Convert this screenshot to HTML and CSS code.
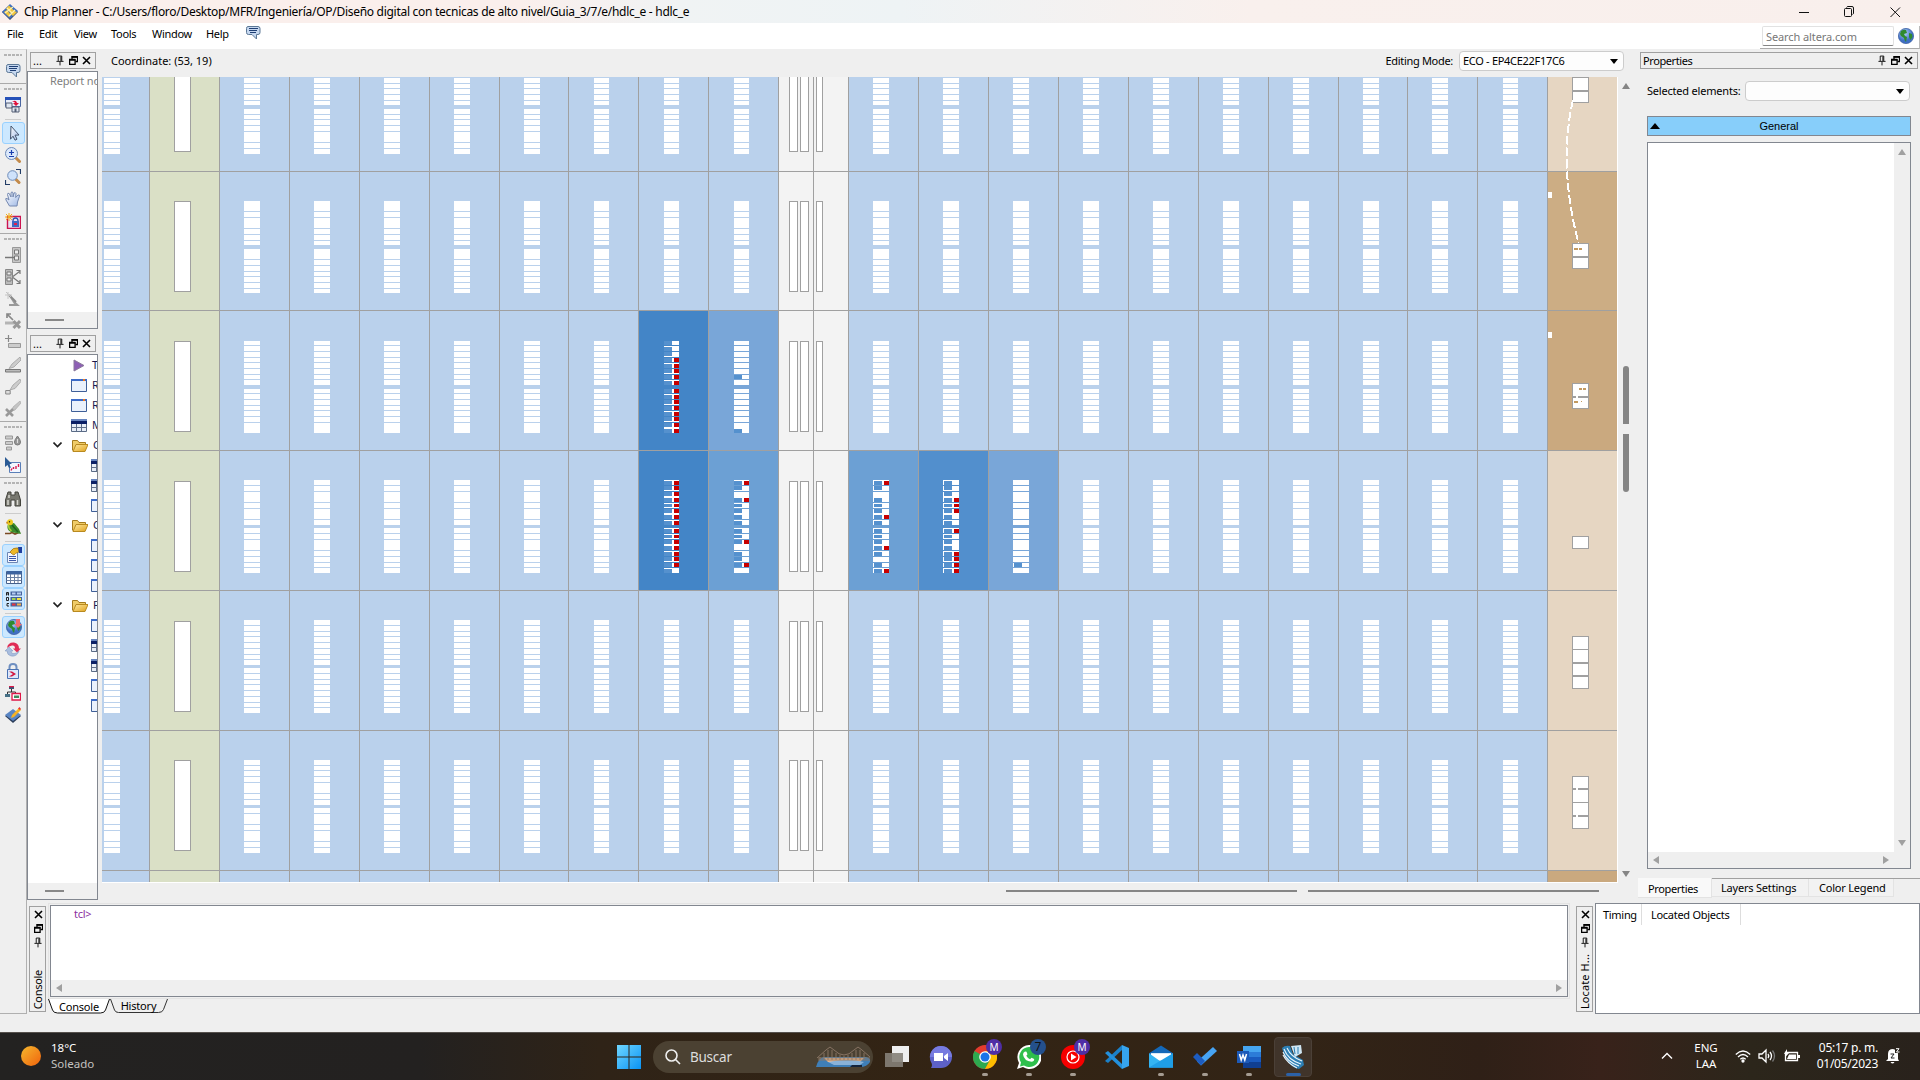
FILE: index.html
```html
<!DOCTYPE html>
<html lang="es">
<head>
<meta charset="utf-8">
<title>Chip Planner</title>
<link rel="stylesheet" href="styles.css">
</head>
<body>
<svg class="defs" width="0" height="0">
  <defs>
    <linearGradient id="gBlue" x1="0" y1="0" x2="1" y2="1"><stop offset="0" stop-color="#fff"/><stop offset="1" stop-color="#9fb9e6"/></linearGradient>
    <linearGradient id="gWin" x1="0" y1="0" x2="1" y2="1"><stop offset="0" stop-color="#6fd6ff"/><stop offset="1" stop-color="#0a93f5"/></linearGradient>
    <linearGradient id="gSun" x1="0" y1="0" x2="1" y2="1"><stop offset="0" stop-color="#f5b92e"/><stop offset="1" stop-color="#f0620c"/></linearGradient>
    <linearGradient id="gFold" x1="0" y1="0" x2="1" y2="1"><stop offset="0" stop-color="#ffe9a0"/><stop offset="1" stop-color="#e0a21c"/></linearGradient>
    <radialGradient id="gGlobe" cx=".4" cy=".3"><stop offset="0" stop-color="#b9d6ff"/><stop offset="1" stop-color="#3f6fc4"/></radialGradient>
  </defs>
  <symbol id="chat" viewBox="0 0 16 16"><path d="M3 1.500h10q2 0 2 2v4q0 2-2 2h-1.500V14L7 9.500H3.500q-2 0-2-2v-4q0-2 1.500-2z" fill="#c5d7ef" stroke="#5c7896"/><path d="M4 3.500h9M4 5.500h8M5 7.500h6" stroke="#1f3f74"/></symbol>
  <symbol id="chip" viewBox="0 0 16 16"><path d="M8 1l8 7-8 8-8-8z" fill="#33415c"/><path d="M8 0l8 7-8 8-8-7z" fill="#3f6fc0"/><path d="M4 4.500l3-3 5 5-3 3zM9 10l3-3 3 1-4 4zM2 8l3-2 4 5-2 2z" fill="#f3c53b"/><path d="M5 4l5 5M11 3L3 9M13 6l-6 6" stroke="#fff2ae" stroke-width="1.300"/></symbol>
  <symbol id="winchip" viewBox="0 0 16 16"><path d="M.5.500h15v9H.5z" fill="#e8eefb" stroke="#4a66a0"/><path d="M0 0h16v3H0z" fill="#2450b8"/><path d="M1 6h6v5H1zM7 10h7v5H7z" fill="#dfe6f0" stroke="#555f75"/><path d="M9.500 11.500h2V15h-2z" fill="#555f75"/><path d="M7 5q4-3 5 1h2l-3 3-3-3h2q-1-2-3-1z" fill="#e0103a"/></symbol>
  <symbol id="arrow" viewBox="0 0 16 16"><path d="M5 1l8 9-4 .2 2 4-2 1-2-4-2.500 3z" fill="url(#gBlue)" stroke="#44546e"/></symbol>
  <symbol id="zoompm" viewBox="0 0 16 16"><path d="M11 11l3.500 3.500" stroke="#c38a4a" stroke-width="3" stroke-linecap="round"/><circle cx="6.500" cy="6.500" r="6" fill="#dbe8fb" stroke="#6d8bb8"/><path d="M6.500 3v5M4 5.500h5M4 9.500h5" stroke="#1a3fb0" stroke-width="1.200"/></symbol>
  <symbol id="zoomfit" viewBox="0 0 16 16"><path d="M11 10.500l3 3" stroke="#c38a4a" stroke-width="3" stroke-linecap="round"/><circle cx="7.500" cy="6.500" r="4.800" fill="#cfe2fb" stroke="#6d8bb8"/><path d="M11 .5h4.500V5M.5 11v4.500H5" fill="none" stroke="#223c66" stroke-width="1.200"/></symbol>
  <symbol id="hand" viewBox="0 0 16 16"><path d="M4.500 15L1 9q-1-2 1-1.500L4 9 2.500 3.500q0-2 1.700-1L6 6V1.700q1-1.700 2 0V6l1-4q1.500-1 2 .5L10.700 6.500 13 4q2-.5 1.500 1.200L12.500 11l-.5 4z" fill="url(#gBlue)" stroke="#7488b0"/></symbol>
  <symbol id="lockstar" viewBox="0 0 16 16"><path d="M2.500 3.500h13v12h-13z" fill="#e7dff3" stroke="#cc1450" stroke-width="1.400"/><path d="M4 0v8M0 4h8M1 1l6 6M7 1L1 7" stroke="#f3b116"/><path d="M8 8q0-3 2.500-3T13 8" fill="none" stroke="#2a55b0" stroke-width="1.300"/><path d="M7 8h7v6H7z" fill="#4069c4"/><path d="M9 10h3v2H9z" fill="#e0204c"/></symbol>
  <symbol id="gport" viewBox="0 0 16 16"><path d="M7.500.500h8v15h-8z" fill="#c6c6c6" stroke="#999"/><path d="M9.500 3h4v4h-4zM9.500 9h4v4h-4z" fill="#eee" stroke="#777"/><path d="M0 10.500h9" stroke="#777" stroke-width="1.500"/></symbol>
  <symbol id="gshare" viewBox="0 0 16 16"><path d="M.5.500h7v15h-7z" fill="#bbb" stroke="#888"/><path d="M2 3h4v3H2zM2 9h4v3H2z" fill="#eee" stroke="#777"/><path d="M8 7.500l6.500-5M11.500 1.500H15V5M8 8.500l6.500 5M11.500 14.500H15V11" fill="none" stroke="#777" stroke-width="1.200"/></symbol>
  <symbol id="gwand" viewBox="0 0 16 16"><path d="M4 5l11 10H4v-2h5z" fill="#999"/><path d="M4 4l7 7" stroke="#8a8a8a" stroke-width="2"/><path d="M3 1v7M0 4h7M1 1l5 5" stroke="#c4c4c4"/></symbol>
  <symbol id="gnox" viewBox="0 0 16 16"><path d="M2 1l6 6M2 5V1h4" fill="none" stroke="#888" stroke-width="1.700"/><path d="M0 8.500h9v3H0z" fill="#b4b4b4"/><path d="M8.500 8l6.500 7M15 8l-6.500 7" stroke="#999" stroke-width="3"/></symbol>
  <symbol id="gplus" viewBox="0 0 16 16"><path d="M3.500 0v7M0 3.500h7" stroke="#888" stroke-width="1.200"/><path d="M3.500 8.500h12v4h-12z" fill="#ccc" stroke="#999"/></symbol>
  <symbol id="gpen" viewBox="0 0 16 16"><path d="M15 0L7 7l-3 4.500 5-1.500 7-7z" fill="#ccc" stroke="#999" stroke-width=".7"/><path d="M.5 12.500h15v2.500H.5z" fill="#bbb" stroke="#777"/></symbol>
  <symbol id="gpen2" viewBox="0 0 16 16"><path d="M15 0L8 6l-3 5 5-1.500 6-7z" fill="#ccc" stroke="#999" stroke-width=".7"/><path d="M.7 11.500h4.500v3.500H.7z" fill="#ddd" stroke="#888"/></symbol>
  <symbol id="gpenx" viewBox="0 0 16 16"><path d="M15 0L8 6l-1 4 3-1 6-7z" fill="#c4c4c4" stroke="#aaa" stroke-width=".7"/><path d="M1 8l7 7M8 8l-7 7" stroke="#999" stroke-width="2.600"/></symbol>
  <symbol id="gdrop" viewBox="0 0 16 16"><path d="M.5 1h7v3h-7zM.5 6.500h7v3h-7zM1.500 12h5v3h-5z" fill="#ccc" stroke="#999"/><path d="M12.500 1q3 4 3 6a3 3 0 0 1-6 0q0-2 3-6z" fill="#999" stroke="#777"/><path d="M12.500 4v4" stroke="#ddd"/></symbol>
  <symbol id="curwave" viewBox="0 0 16 16"><path d="M4.500 5.500h11v10h-11z" fill="#f3f7ff" stroke="#5a7fb8"/><path d="M6 13.500l1-2M8.500 12v-2M11 12V9M13.500 10V7" stroke="#d81c50" stroke-width="1.400"/><path d="M0 0l7 7H4l2 3.500-2 .5-1.500-3L0 10z" fill="#2a5a94"/></symbol>
  <symbol id="binoc" viewBox="0 0 16 16"><path d="M3 1h3v3h4V1h3l2.500 8v6H10V9H6v6H.5V9z" fill="#77776f" stroke="#44443e"/><path d="M3 9v5M12.500 9v5M4 4v3" stroke="#d6d6d0" stroke-width="1.500"/></symbol>
  <symbol id="bird" viewBox="0 0 16 16"><path d="M0 14.500h5l2-1 3 1.500 5-2" stroke="#7a4a22" stroke-width="1.600" fill="none"/><path d="M3 5l6-1 5 6 2 5-5-1-5-1Q1 11 3 5z" fill="#3c8c2c"/><path d="M7 6l6 7" stroke="#1f5f20" stroke-width="1.500"/><path d="M3.500 6q0 4 3 6" stroke="#a6cf3a" stroke-width="1.500" fill="none"/><circle cx="5" cy="3.200" r="3" fill="#ecc81e"/><path d="M1 2.500l2 1-1 2z" fill="#c77c10"/><circle cx="4.500" cy="2.800" r=".7" fill="#222"/></symbol>
  <symbol id="proph" viewBox="0 0 16 16"><path d="M1.500 5.500h10v10h-10z" fill="#f2f6ff" stroke="#6d87b5"/><path d="M3 9.500h7M3 11.500h7M3 13.500h7" stroke="#3c58a8"/><path d="M4 5q3-5 8-4l1 4q-4 1-5 3L6 7z" fill="#edb827" stroke="#9b6d10" stroke-width=".7"/><path d="M12 0h4v6h-3z" fill="#1f3fa0"/></symbol>
  <symbol id="table" viewBox="0 0 16 16"><path d="M.5 2.500h15v12H.5z" fill="#fff" stroke="#44608c"/><path d="M1 2h15v3.500H1z" fill="#3d649f"/><path d="M.5 8.500h15M.5 11.500h15M4.500 5v9M8.500 5v9M12 5v9" stroke="#6a7fa0"/></symbol>
  <symbol id="abc" viewBox="0 0 16 16"><path d="M.5 4.500V1.500h2v3M.5 3h2M.5 6.500h2v3h-2zM3 12.500H1v2.500h2" fill="none" stroke="#111" stroke-width=".9"/><path d="M4.500.500H16v4H4.500zM4.500 6H16v4H4.500zM4.500 11.500H16v4H4.500z" fill="#45639c"/><path d="M6 1.500h3.500v2H6zM11 1.500h4v2h-4z" fill="#b7cdf1"/><path d="M6 7h3.500v2H6z" fill="#a1d44e"/><path d="M11 7h4v2h-4z" fill="#f4e33a"/><path d="M6 12.500h3.500v2H6z" fill="#e8343e"/><path d="M11 12.500h4v2h-4z" fill="#f3b04a"/></symbol>
  <symbol id="globe" viewBox="0 0 16 16"><circle cx="8" cy="8" r="7.600" fill="url(#gGlobe)" stroke="#3f62a6" stroke-width=".8"/><path d="M3 3q3-2 5-1l1 3-3 1 1 2 2 1-1 5q-2-2-2-4L3 8 2 6zM11 5l3 1 .5 3-2 3-1.500-3z" fill="#2f8a2e"/></symbol>
  <symbol id="globedn" viewBox="0 0 16 16"><use href="#globe"/><path d="M10 0h4v5h2l-4 4-4-4h2z" fill="#f36a6e"/></symbol>
  <symbol id="refresh" viewBox="0 0 16 16"><path d="M2 7Q3 1 9 1.500q5 1 5 6h2l-4 4-4-4h2Q10 4 7 4.500 4 5 2 7z" fill="#e02d55"/><path d="M14 10q-2 6-8 5-4-1-4-5H0l4-4 4 4H6q0 3 3 2.500 3 0 5-2.500z" fill="#a9bdde" stroke="#7a93bd" stroke-width=".5"/></symbol>
  <symbol id="lock" viewBox="0 0 16 16"><path d="M4.500 7V4q0-3 3.500-3t3.500 3v3" fill="none" stroke="#6f8fc0" stroke-width="2"/><path d="M2.500 6.500h11v9h-11z" fill="#dbe7fa" stroke="#4a72b4"/><path d="M4 8.500l4 2.500-4 2.500h3l4-2.500-4-2.500z" fill="#d2143e"/></symbol>
  <symbol id="hier" viewBox="0 0 16 16"><path d="M4 1h5v3H4z" fill="#3a5474"/><path d="M4 1h5v1.200H4z" fill="#e01848"/><path d="M6.500 4v3M2.500 9V7h8v2" stroke="#333" fill="none"/><path d="M0 9h5v3H0z" fill="#467086"/><path d="M7 8.500h8.500v6.500H7z" fill="#fff" stroke="#e01848" stroke-width="1.300"/><path d="M9 10.500h5V13H9z" fill="#3f8c5c"/></symbol>
  <symbol id="chippen" viewBox="0 0 16 16"><path d="M8 3l8 6-8 7-8-7z" fill="#2b3c58"/><path d="M8 2l8 6-8 6-8-6z" fill="#5a86c4"/><path d="M6 11l1-3 7-7 2 2-7 7z" fill="#f6b324"/><path d="M13 1.500L14.500 0 16 2l-1 1z" fill="#e33"/></symbol>
  <symbol id="play" viewBox="0 0 16 13"><path d="M3 1l10 5.500L3 12z" fill="#8d5fb5" stroke="#8a7a9a"/></symbol>
  <symbol id="page" viewBox="0 0 16 13"><path d="M.5.500h15v12H.5z" fill="#eaf1fc" stroke="#3f5f98"/><path d="M0 0h16v2H0z" fill="#3c6bc8"/><path d="M12 0h2v2h-2z" fill="#f07a1a"/></symbol>
  <symbol id="grid" viewBox="0 0 16 13"><path d="M.5.500h15v12H.5z" fill="#e8eef8" stroke="#5a6b86"/><path d="M0 0h16v2H0z" fill="#6684bf"/><path d="M0 2h16v3H0z" fill="#0a1f66"/><path d="M.5 8.500h15M5.500 5v7M10.500 5v7" stroke="#5f6f8a"/></symbol>
  <symbol id="folder" viewBox="0 0 16 13"><path d="M.5 11.500V1.500h5l1.500 2h6.500v3" fill="#f0cc68" stroke="#a57c1e"/><path d="M1 12.500l3-7h12l-3 7z" fill="url(#gFold)" stroke="#b98a20"/></symbol>
  <symbol id="pin" viewBox="0 0 9 11"><path d="M2.500 6V.5h4V6M5.500 1v5M.5 6.500h8M4.500 7v4" fill="none" stroke="#000"/></symbol>
  <symbol id="rest" viewBox="0 0 9 9"><path d="M3 3V1h5.500v4.500H6.500" fill="none" stroke="#000" stroke-width="1.300"/><path d="M.6 3.800h5.500v4.500H.6z" fill="none" stroke="#000" stroke-width="1.300"/><path d="M2.500.8h6.500M0 3.600h6.500" stroke="#000" stroke-width="1.600"/></symbol>
  <symbol id="x" viewBox="0 0 9 9"><path d="M1 1l7 7M8 1L1 8" stroke="#000" stroke-width="1.600"/></symbol>
</svg>

<header class="title">
  <svg class="app" width="16" height="16"><use href="#chip"/></svg>
  <span class="title-text">Chip Planner - C:/Users/floro/Desktop/MFR/Ingeniería/OP/Diseño digital con tecnicas de alto nivel/Guia_3/7/e/hdlc_e - hdlc_e</span>
  <svg class="winbtns" width="110" height="20" viewBox="0 0 110 20" fill="none" stroke="#111"><path d="M4 10.500h10M49.500 7.500q0-1 1-1h5q1 0 1 1v6q0 1-1 1h-5q-1 0-1-1zM51.500 5.500q.5-1 1.500-1h4q1.500 0 1.500 1.500v5q0 1-1 1.500M95.500 5.500l9.500 9.500M105 5.500l-9.500 9.500"/></svg>
</header>

<nav class="menu">
  <span class="m1">File</span><span class="m2">Edit</span><span class="m3">View</span><span class="m4">Tools</span><span class="m5">Window</span><span class="m6">Help</span>
  <svg class="menu-chat" width="16" height="16"><use href="#chat"/></svg>
  <div class="search"><div class="search-box">Search altera.com</div><svg width="16" height="16"><use href="#globe"/></svg></div>
</nav>

<main class="body">
  <aside class="tools">
    <div class="grp"><i class="grip"></i><b><svg><use href="#chat"/></svg></b></div>
    <div class="grp"><i class="grip"></i><b><svg><use href="#winchip"/></svg></b><i class="sep"></i>
      <b class="on"><svg><use href="#arrow"/></svg></b><b><svg><use href="#zoompm"/></svg></b><b><svg><use href="#zoomfit"/></svg></b><b><svg><use href="#hand"/></svg></b><b><svg><use href="#lockstar"/></svg></b></div>
    <div class="grp"><i class="grip"></i><b><svg><use href="#gport"/></svg></b><b><svg><use href="#gshare"/></svg></b><b><svg><use href="#gwand"/></svg></b><b><svg><use href="#gnox"/></svg></b><b><svg><use href="#gplus"/></svg></b><b><svg><use href="#gpen"/></svg></b><b><svg><use href="#gpen2"/></svg></b><b><svg><use href="#gpenx"/></svg></b></div>
    <div class="grp"><i class="grip"></i><b><svg><use href="#gdrop"/></svg></b><b><svg><use href="#curwave"/></svg></b></div>
    <div class="grp last"><i class="grip"></i><b><svg><use href="#binoc"/></svg></b><i class="sep"></i><b><svg><use href="#bird"/></svg></b><i class="sep"></i>
      <b class="on"><svg><use href="#proph"/></svg></b><b class="on"><svg><use href="#table"/></svg></b><b class="on"><svg><use href="#abc"/></svg></b><i class="sep"></i>
      <b class="on"><svg><use href="#globedn"/></svg></b><b><svg><use href="#refresh"/></svg></b><b><svg><use href="#lock"/></svg></b><b><svg><use href="#hier"/></svg></b><b><svg><use href="#chippen"/></svg></b></div>
  </aside>

  <div class="work">
    <div class="upper">
      <div class="docks">
        <div class="dock-title"><span>...</span><svg class="p"><use href="#pin"/></svg><svg><use href="#rest"/></svg><svg><use href="#x"/></svg></div>
        <div class="dock report"><p>Report no</p><div class="hs"><i></i></div></div>
        <div class="dock-title second"><span>...</span><svg class="p"><use href="#pin"/></svg><svg><use href="#rest"/></svg><svg><use href="#x"/></svg></div>
        <div class="dock tasks"><ul id="tree"></ul><div class="hs"><i></i></div></div>
      </div>

      <section class="planner">
        <div class="bar"><span class="coord">Coordinate: (53, 19)</span><span class="mode">Editing Mode:</span><div class="combo mode-combo">ECO - EP4CE22F17C6<i class="down"></i></div></div>
        <div class="view">
          <svg id="map" width="1516" height="806" viewBox="102 77 1516 806" shape-rendering="crispEdges"></svg>
          <div class="vscroll"><i class="up"></i><em class="t1"></em><em class="t2"></em><i class="dn"></i></div>
        </div>
        <div class="hscroll"><em></em><em></em></div>
      </section>

      <section class="props">
        <div class="dock-title wide"><span>Properties</span><svg class="p"><use href="#pin"/></svg><svg><use href="#rest"/></svg><svg><use href="#x"/></svg></div>
        <div class="sel"><span>Selected elements:</span><div class="combo"><i class="down"></i></div></div>
        <div class="general"><i></i><span>General</span></div>
        <div class="list"><div class="list-main"><div class="blank"></div><div class="lv"><i class="up"></i><i class="dn"></i></div></div><div class="lh"><i class="lt"></i><i class="rt"></i></div></div>
        <div class="tabs"><span class="cur">Properties</span><span class="t2">Layers Settings</span><span class="t3">Color Legend</span></div>
      </section>
    </div>

    <div class="lower">
      <div class="strip"><svg><use href="#x"/></svg><svg><use href="#rest"/></svg><svg class="p"><use href="#pin"/></svg><span>Console</span></div>
      <div class="console">
        <div class="con-out"><div class="con-box"><p>tcl&gt;</p><div class="ch"><i class="lt"></i><i class="rt"></i></div></div></div>
        <div class="con-tabs">
          <span class="ct"><svg width="62" height="15"><path d="M.5 0l4 11q1 3 5 3h43q4 0 5-3l4-11z" fill="#fff"/><path d="M.5 0l4 11q1 3 5 3h43q4 0 5-3l4-11" fill="none" stroke="#111"/></svg><em>Console</em></span>
          <span class="ct h"><svg width="58" height="15"><path d="M.5 0l4 11q1 2.500 4 2.500h40q4 0 5-3l4-10.500" fill="none" stroke="#333"/></svg><em>History</em></span>
        </div>
      </div>
      <div class="strip loc"><svg><use href="#x"/></svg><svg><use href="#rest"/></svg><svg class="p"><use href="#pin"/></svg><span>Locate H...</span></div>
      <div class="locate"><span class="l1">Timing</span><span class="l2">Located Objects</span></div>
    </div>
  </div>
</main>

<footer class="taskbar">
  <div class="weather"><svg width="20" height="20"><circle cx="10" cy="10" r="10" fill="url(#gSun)"/></svg><div><p>18°C</p><p class="dim">Soleado</p></div></div>
  <div class="apps">
    <svg class="start" width="24" height="24"><path d="M0 0h11.500v11.500H0zM12.500 0H24v11.500H12.500zM0 12.500h11.500V24H0zM12.500 12.500H24V24H12.500z" fill="url(#gWin)"/></svg>
    <div class="find">
      <svg width="16" height="16" fill="none" stroke="#eee" stroke-width="1.600"><circle cx="6.500" cy="6.500" r="5.500"/><path d="M10.500 10.500l4.500 4.500"/></svg><span>Buscar</span>
      <svg class="bridge" width="56" height="22" viewBox="0 0 56 22"><path d="M0 21q3-10 8-10h42q5 1 4 5-3 5-10 5z" fill="#3f7fb8"/><path d="M8 12h40l-4 4H12z" fill="#f0b98a"/><path d="M12 16q20-4 36 0l-4 3H18z" fill="#8ab2d8"/><path d="M2 12h52M2 14h52M1 12L10 4l4-3 4 3q10 10 20 0l4-3 4 3 8 7M4 11v3M8 7v7M12 4v10M16 4v10M20 7v7M24 9v5M28 10v4M32 9v5M36 7v7M40 4v10M44 4v10M48 7v7" fill="none" stroke="#8d7868" stroke-width=".9"/><path d="M36 19h10v2H34z" fill="#14243c"/></svg>
    </div>
    <svg class="a" width="24" height="24"><path d="M7 1h17v16H7z" fill="#eee"/><path d="M0 8h18v14H0z" fill="#858178" opacity=".9"/></svg>
    <svg class="a" width="24" height="24"><path d="M12 1a11 11 0 0 1 0 22H2q2-3 0-6A11 11 0 0 1 12 1z" fill="#5d61c8"/><path d="M12 1a11 11 0 0 1 11 11H1A11 11 0 0 1 12 1z" fill="#777be0"/><path d="M5 8h9v8H5zM15 11l4-3v8l-4-3z" fill="#fff"/></svg>
    <div class="a dot"><svg width="24" height="24"><circle cx="12" cy="12" r="12" fill="#e33b2e"/><path d="M12 12L1.600 6A12 12 0 0 0 12 24l5-9z" fill="#2da94f"/><path d="M12 24A12 12 0 0 0 22.400 6H12l5 9z" fill="#fdbd00"/><circle cx="12" cy="12" r="5.800" fill="#fff"/><circle cx="12" cy="12" r="4.500" fill="#1a73e8"/></svg><u>M</u></div>
    <div class="a dot"><svg width="24" height="24"><path d="M12 0a12 12 0 1 1-6 22L0 24l2-6A12 12 0 0 1 12 0z" fill="#fff"/><path d="M12 2a10 10 0 1 1-5 18.500L3 21.500l1-4A10 10 0 0 1 12 2z" fill="#2fbf4c"/><path d="M8 6.500l1.500.3 1 2.500-1.200 1.500q1.500 2.700 3.700 3.500l1.500-1.500 2.700 1.200q0 2.700-2.700 2.700Q7 16 6 9.500q0-2 2-3z" fill="#fff"/></svg><u class="seven">7</u></div>
    <div class="a dot"><svg width="24" height="24"><circle cx="12" cy="12" r="12" fill="#f60000"/><circle cx="12" cy="12" r="6" fill="none" stroke="#fff" stroke-width="1.200"/><path d="M10 8.500l5.500 3.500-5.500 3.500z" fill="#fff"/></svg><u>M</u></div>
    <svg class="a" width="24" height="24"><path d="M17 5L3 18l-3-2L17 0z" fill="#1b80c8"/><path d="M17 19L3 6 0 8l17 16z" fill="#2390dc"/><path d="M17 0l7 3v18l-7 3z" fill="#36a4ee"/></svg>
    <div class="a dot"><svg width="24" height="24" viewBox="0 0 25 24"><path d="M0 8L12.500 0 25 8v15H0z" fill="#1468b8"/><path d="M2 8h21v8H2z" fill="#fff"/><path d="M0 8l12.500 9L25 8v15H0z" fill="#34b4f2"/><path d="M0 23L25 8v15z" fill="#1f9ee6"/></svg></div>
    <div class="a dot"><svg width="24" height="24"><path d="M8 20.500l-4-4L20 2l4 4z" fill="#47a4f4"/><path d="M0 12l4-4 8 8-4 4.500z" fill="#1d5cc0"/></svg></div>
    <div class="a dot"><svg width="24" height="24"><path d="M6 1h18v6H6z" fill="#46a5ef"/><path d="M6 7h18v5H6z" fill="#2c7cd8"/><path d="M6 12h18v5H6z" fill="#195abe"/><path d="M6 17h18v6H6z" fill="#103f91"/><path d="M0 6h12v12H0z" fill="#1d5ab8"/><path d="M2.500 9l1.700 6L6 10l1.800 5 1.700-6" fill="none" stroke="#fff" stroke-width="1.500"/></svg></div>
    <div class="a tile"><svg width="24" height="24"><path d="M1 3q3-3 8-2l3 8 10 6 1 5-5 4Q6 22 1 3z" fill="#2d7fb4"/><path d="M10 1l10-1 1 8-7 4z" fill="#cfe6f3"/><path d="M2 7q4 10 16 14M3 4q4 11 17 15M6 3q4 9 15 13M2 10q4 8 14 13" stroke="#e8f4fb" stroke-width="1.100" fill="none"/><path d="M13 2l1 7M17 2v7" stroke="#2d7fb4"/></svg></div>
  </div>
  <div class="tray">
    <svg width="12" height="8" fill="none" stroke="#fff" stroke-width="1.400"><path d="M1 6.500L6 1.500l5 5"/></svg>
    <div class="lang"><p>ENG</p><p>LAA</p></div>
    <svg class="net" width="43" height="16" viewBox="0 0 43 16" fill="none" stroke="#fff" stroke-width="1.300"><path d="M.8 6.500q7.200-7 14.400 0M3 9q5-5 10 0M5.300 11.300q2.700-2.600 5.400 0"/><circle cx="8" cy="13" r="1" fill="#fff"/><path d="M24 6h3l4-4v12l-4-4h-3zM33 6q1.500 2 0 4M35 4q3 4 0 8"/><path d="M37.500 2.500q4 5.500 0 11" stroke="#777"/></svg>
    <svg class="bat" width="16" height="14"><path d="M1.500 3.500h12v8h-12z" fill="none" stroke="#fff" stroke-width="1.300"/><path d="M5 5.500h7V10H3zM14 6h2v3h-2z" fill="#fff"/><path d="M3 0L0 5h2L1 8.500 5 4H3z" fill="#fff"/></svg>
    <div class="clock"><p>05:17 p. m.</p><p>01/05/2023</p></div>
    <svg class="bell" width="14" height="16"><path d="M2 11V6q0-5 5-5 5 1 5 5v5l1 2H0z" fill="#fff"/><path d="M4.500 14h4q-2 3-4 0z" fill="#fff"/><path d="M4.500 6H8L5 10h3.500" fill="none" stroke="#222"/><path d="M9 0h5v5H9z" fill="#2b251e"/><path d="M10 .7h3L10.500 4h3" stroke="#fff" fill="none"/></svg>
  </div>
</footer>
<script src="app.js"></script>
</body>
</html>
```
FILE: styles.css
```css
* { box-sizing: border-box; margin: 0; padding: 0; }
body { width: 1920px; height: 1080px; overflow: hidden; display: flex; flex-direction: column; background: #efefef; color: #000; font: 11px/16px "Noto Sans", "DejaVu Sans", sans-serif; }
.defs { position: absolute; }
i, em, u, b { font-style: normal; text-decoration: none; font-weight: 400; display: block; }
svg { display: block; flex: none; }
span { white-space: nowrap; }

.title { height: 23px; flex: none; display: flex; align-items: center; padding: 0 15px 0 2px; background: linear-gradient(90deg, #faefec 0, #faefec 520px, #f0f3f4 680px, #eef3f5 900px, #f9f0ed 1250px, #f9efec 100%); }
.title-text { margin-left: 6px; font-size: 12px; letter-spacing: -.285px; flex: 1; }

.menu { height: 26px; flex: none; display: flex; background: #fff; padding: 3px 0 0 7px; letter-spacing: -.3px; }
.m1 { width: 32px; }
.m2 { width: 35px; }
.m3 { width: 37px; }
.m4 { width: 41px; }
.m5 { width: 54px; }
.m6 { width: 39px; }
.menu-chat { margin-top: -1px; }
.search { margin-left: auto; width: 160px; height: 23px; border-bottom: 1px solid #aaa; border-right: 1px solid #bbb; display: flex; gap: 4px; padding: 0 5px 0 2px; }
.search svg { margin-top: 2px; }
.search-box { width: 132px; height: 20px; border: 1px solid #e2e2e2; border-bottom: 1px solid #858585; border-radius: 2px; color: #777; padding: 2px 3px; letter-spacing: -.1px; }

.body { flex: 1; min-height: 0; display: flex; }
.tools { width: 27px; height: 965px; border-right: 1px solid #b0b0b0; border-bottom: 1px solid #b0b0b0; border-top: 1px solid #ddd; }
.grp { border-bottom: 1px solid #aaa; padding-bottom: 1px; }
.grp.last { border: 0; }
.grip { height: 10px; margin: 0 4px; background: radial-gradient(circle at 1.500px 5px, #b4b4b4 1.200px, transparent 1.500px) 0 0 / 4px 10px; }
.tools b { width: 23px; height: 22px; margin-left: 2px; padding: 3px; border-radius: 3px; }
.tools b.on { background: #cce8ff; border: 1px solid #99d1ff; padding: 2px 3px; }
.tools svg { width: 16px; height: 16px; }
.sep { height: 6px; margin: 0 5px; border-bottom: 1px solid #ccc; transform: translateY(-2px); }

.work { flex: 1; display: flex; flex-direction: column; }
.upper { height: 852px; display: flex; }
.docks { width: 75px; padding-top: 3px; }
.dock-title { width: 66px; height: 17px; margin-left: 3px; border: 1px solid #a0a0a0; display: flex; align-items: center; gap: 4px; padding: 0 4px 0 2px; }
.dock-title span { flex: 1; }
.dock-title svg { width: 9px; height: 9px; }
.dock-title svg.p { width: 8px; height: 11px; margin-right: 1px; }
.dock { width: 71px; margin-top: 2px; border: 1px solid #828790; background: #fff; display: flex; flex-direction: column; overflow: hidden; }
.report { height: 258px; }
.report p { padding: 1px 0 0 22px; color: #808080; white-space: nowrap; letter-spacing: -.15px; }
.second { margin-top: 6px; }
.tasks { height: 546px; }
.hs { height: 16px; margin-top: auto; background: #f0f0f0; padding: 7px 0 0 17px; flex: none; }
.hs i { width: 19px; height: 2px; background: #888; }
#tree { list-style: none; }
#tree li { height: 20px; display: flex; align-items: center; white-space: nowrap; padding-left: 43px; gap: 5px; color: #1a1a50; }
#tree li.kid { padding-left: 63px; }
#tree li.parent { padding-left: 25px; gap: 10px; }
#tree li.parent span { margin-left: -5px; }
#tree svg { width: 16px; height: 13px; }
#tree svg.chev { width: 9px; height: 6px; }

.planner { width: 1535px; display: flex; flex-direction: column; }
.bar { height: 28px; display: flex; align-items: center; padding: 0 13px 4px 9px; }
.coord { flex: 1; }
.mode { margin-right: 6px; letter-spacing: -.3px; }
.combo { height: 20px; border: 1px solid #ccc; border-radius: 4px; background: #fdfdfd; display: flex; align-items: center; padding: 0 5px 0 3px; }
.mode-combo { width: 165px; letter-spacing: -.3px; }
.down { margin-left: auto; border: 4px solid transparent; border-top: 5px solid #000; border-bottom: 0; }
.view { height: 806px; display: flex; }
.vscroll { width: 16px; display: flex; flex-direction: column; align-items: center; padding-top: 6px; }
.up, .dn { border: 4px solid transparent; border-bottom: 6px solid #858585; border-top: 0; }
.dn { border-top: 6px solid #858585; border-bottom: 0; }
.vscroll em { width: 6px; height: 58px; background: #858585; }
.vscroll .t1 { margin-top: 277px; border-radius: 3px 3px 0 0; }
.vscroll .t2 { margin-top: 10px; border-radius: 0 0 3px 3px; }
.vscroll .dn { margin-top: 379px; }
.hscroll { flex: 1; display: flex; gap: 11px; padding: 7px 0 0 904px; }
.hscroll em { width: 291px; height: 2px; background: #858585; }

.props { width: 283px; padding: 3px 0 0 1px; }
.wide { width: 278px; margin-left: 2px; letter-spacing: -.4px; padding-left: 2px; }
.sel { display: flex; align-items: center; height: 20px; margin: 12px 0 0 9px; letter-spacing: -.2px; }
.sel .combo { width: 165px; margin-left: auto; margin-right: 10px; }
.general { width: 264px; height: 20px; margin: 15px 0 0 9px; border: 1px solid #828790; background: #87cefa; text-align: center; display: flex; align-items: center; font-family: "Liberation Sans", Arial, sans-serif; }
.general i { border: 5px solid transparent; border-bottom: 6px solid #000; border-top: 0; margin-left: 2px; }
.general span { flex: 1; padding-right: 12px; }
.list { width: 264px; height: 727px; margin: 6px 0 0 9px; border: 1px solid #828790; background: #fff; display: flex; flex-direction: column; }
.list-main { flex: 1; display: flex; }
.blank { flex: 1; }
.lv { width: 16px; background: #efefef; display: flex; flex-direction: column; justify-content: space-between; align-items: center; padding: 6px 0; }
.lh, .ch { height: 16px; background: #efefef; display: flex; justify-content: space-between; align-items: center; padding: 0 21px 0 5px; }
.list i { border-bottom-color: #a0a0a0; border-top-color: #a0a0a0; }
.lt, .rt { border: 4px solid transparent !important; border-right: 6px solid #a0a0a0 !important; border-left: 0 !important; }
.rt { border: 4px solid transparent !important; border-left: 6px solid #a0a0a0 !important; border-right: 0 !important; }
.tabs { display: flex; margin: 9px 0 0; height: 20px; letter-spacing: -.35px; border-top: 1px solid #a0a0a0; }
.tabs span { height: 18px; padding: 1px 0 0 9px; background: #f2f2f2; border: solid #e3e3e3; border-width: 0 1px 1px 0; }
.tabs .cur { width: 74px; height: 20px; margin-top: -1px; padding: 3px 0 0 10px; background: #f9f9f9; }
.tabs .t2 { width: 97px; letter-spacing: -.2px; }
.tabs .t3 { width: 85px; padding-left: 10px; letter-spacing: -.2px; }

.lower { height: 131px; display: flex; padding-top: 2px; }
.strip { width: 17px; height: 106px; margin: 3px 0 0 2px; border: 1px solid #a0a0a0; display: flex; flex-direction: column; align-items: center; gap: 5px; padding: 3px 0 0 1px; }
.strip svg { width: 9px; height: 9px; }
.strip svg.p { width: 8px; height: 11px; margin-top: -1px; }
.strip span { writing-mode: vertical-rl; transform: rotate(180deg); margin-top: auto; margin-bottom: 2px; letter-spacing: -.3px; }
.console { width: 1524px; padding-left: 2px; }
.con-out { height: 96px; border: 1px solid #e3e3e3; padding: 1px; }
.con-box { height: 92px; border: 1px solid #828790; background: #fff; display: flex; flex-direction: column; }
.con-box p { flex: 1; padding: 0 0 0 23px; color: #8c2fa0; letter-spacing: -.3px; }
.ch { padding: 0 5px; }
.con-tabs { display: flex; }
.ct { display: grid; width: 62px; }
.ct > * { grid-area: 1 / 1; }
.ct em { text-align: center; line-height: 15px; letter-spacing: -.2px; }
.ct.h em { line-height: 13px; margin-right: 5px; }
.strip.loc { margin-left: 6px; }
.strip.loc span { letter-spacing: .1px; }
.locate { flex: 1; height: 111px; margin-left: 2px; border: 1px solid #828790; background: #fff; display: flex; }
.locate span { height: 21px; border-right: 1px solid #ddd; line-height: 22px; }
.locate .l1 { width: 46px; padding-left: 7px; letter-spacing: -.3px; }
.locate .l2 { width: 99px; padding-left: 9px; letter-spacing: -.28px; }

.taskbar { height: 48px; flex: none; border-top: 1px solid #55504c; display: flex; align-items: center; color: #fff; font: 12px/16px "Noto Sans", sans-serif; background: linear-gradient(90deg, #232221 0, #232120 420px, #2f2317 600px, #332414 950px, #322416 1300px, #2f2017 1480px, #38221a 1600px, #2c261b 1750px, #29221c 100%); }
.taskbar p { height: 16px; }
.weather { width: 617px; padding: 0 0 2px 21px; display: flex; align-items: center; gap: 10px; font-size: 11.500px; }
.dim { color: #c4c2c0; }
.apps { display: flex; align-items: center; width: 1044px; }
.find { width: 220px; height: 32px; margin: 0 12px 0 12px; border-radius: 16px; background: #4b4132; display: flex; align-items: center; padding-left: 12px; gap: 9px; font-size: 13.500px; color: #ddd; letter-spacing: -.25px; }
.bridge { margin-left: auto; margin-right: 1px; }
.a { margin-right: 20px; width: 24px; }
.dot { position: relative; }
.dot::after { content: ""; position: absolute; left: 9px; top: 28px; width: 6px; height: 3px; border-radius: 2px; background: #a59c92; }
.dot u { position: absolute; left: 13px; top: -6px; width: 16px; height: 16px; border-radius: 8px; background: #4f2ea5; color: #fff; font-size: 10px; text-align: center; }
.dot .seven { background: #24508c; color: #111; font-size: 12px; }
.tile { width: 38px; height: 40px; margin-left: -7px; padding: 7px 6px; border-radius: 4px; background: #40342a; border: 1px solid #4b4037; position: relative; }
.tile::after { content: ""; position: absolute; left: 11px; top: 35px; width: 15px; height: 3px; border-radius: 2px; background: #2c62a8; }
.tray { display: flex; align-items: center; padding-bottom: 1px; }
.lang { margin-left: 20px; width: 26px; text-align: center; font-size: 11.500px; }
.net { margin-left: 16px; }
.bat { margin-left: 6px; }
.clock { width: 78px; text-align: right; letter-spacing: -.25px; }
.bell { margin-left: 8px; }
```
FILE: app.js
```js
// Task tree rows: [kind, icon, label]
const rows = [
  ['', 'play', 'T'], ['', 'page', 'R'], ['', 'page', 'R'], ['', 'grid', 'M'],
  ['parent', 'folder', 'C'], ['kid', 'grid', ''], ['kid', 'grid', ''], ['kid', 'page', ''],
  ['parent', 'folder', 'C'], ['kid', 'page', ''], ['kid', 'page', ''], ['kid', 'page', ''],
  ['parent', 'folder', 'P'], ['kid', 'page', ''], ['kid', 'grid', ''], ['kid', 'grid', ''],
  ['kid', 'page', ''], ['kid', 'page', '']
];
document.getElementById('tree').innerHTML = rows.map(([kind, icon, label]) =>
  `<li class="${kind}">` +
  (kind === 'parent' ? '<svg class="chev" viewBox="0 0 9 6"><path d="M.5.5l4 4 4-4" fill="none" stroke="#222" stroke-width="1.6"/></svg>' : '') +
  `<svg><use href="#${icon}"/></svg><span>${label}</span></li>`).join('');

// Chip floor plan
let out = '';
const rect = (x, y, w, h, f) => { out += `<rect x="${x}" y="${y}" width="${w}" height="${h}" fill="${f}"/>`; };
const box = (x, y, w, h) => { rect(x, y, w, h, '#a0a0a0'); rect(x + 1, y + 1, w - 2, h - 2, '#fff'); };
const BLUE = '#bad1ec', LINE = '#a0a0a0';

rect(102, 77, 1516, 806, '#fff');
rect(102, 77, 1515, 805, BLUE);
rect(149, 77, 70, 805, '#dae0c6');
rect(778, 77, 70, 805, '#f3f3f3');
const io = [[77, 171, '#e6d6c2'], [171, 310, '#ccad84'], [310, 450, '#caa97f'], [450, 870, '#e6d6c2'], [870, 882, '#caa97f']];
io.forEach(([a, b, c]) => rect(1547, a, 70, b - a, c));

// Row of logic blocks: top, half split, bottom, scan gaps between cells
const bands = [
  { y: 78, e1: 105, s2: 109, e: 154, cuts: [83, 88, 94, 100, 114, 119, 125, 131, 142, 148], ram: [61, 152] },
  { y: 201, e1: 245, s2: 249, e: 293, cuts: [211, 217, 228, 234, 240, 259, 265, 271, 276, 282, 288], ram: [201, 292] },
  { y: 341, e1: 385, s2: 389, e: 433, cuts: [345, 351, 357, 362, 368, 374, 379, 393, 399, 405, 410, 416, 422], ram: [341, 432] },
  { y: 480, e1: 525, s2: 528, e: 573, cuts: [485, 491, 502, 508, 519, 533, 539, 550, 556, 562, 567], ram: [481, 572] },
  { y: 620, e1: 665, s2: 668, e: 713, cuts: [625, 631, 636, 642, 648, 654, 659, 673, 679, 684, 690, 696, 702, 707], ram: [621, 712] },
  { y: 760, e1: 805, s2: 808, e: 853, cuts: [765, 770, 776, 782, 793, 799, 813, 824, 830, 841, 847], ram: [760, 851] }
];
const cols = [79, 219, 289, 359, 429, 499, 568, 638, 708, 848, 918, 988, 1058, 1128, 1198, 1268, 1338, 1407, 1477];
const cells = {
  2: [341, 347, 352, 358, 364, 369, 375, 381, 389, 395, 400, 406, 412, 417, 423, 429],
  3: [481, 486, 492, 498, 504, 509, 515, 521, 529, 535, 540, 546, 552, 557, 563, 569]
};
const all = [...Array(16).keys()];
const used = {
  '2:638': ['#4385c7', all, all.slice(3)],
  '2:708': ['#79a6d8', [6, 15], []],
  '3:638': ['#4385c7', all, all.slice(0, 15)],
  '3:708': ['#6ca0d4', all.filter(i => ![2, 11, 15].includes(i)), [0, 3, 10, 14]],
  '3:848': ['#6ca0d4', all.filter(i => ![2, 13].includes(i)), [0, 6, 11, 15]],
  '3:918': ['#528fcd', all, [3, 4, 5, 8, 12, 13, 14, 15]],
  '3:988': ['#79a6d8', [14], []]
};
const tops = [77, 171, 310, 450, 590, 730, 870];
bands.forEach((b, r) => {
  cols.forEach(c => {
    const u = used[r + ':' + c], bg = u ? u[0] : BLUE;
    if (u) rect(c, tops[r], 70, 140, bg);
    const narrow = (c > 500 && c < 800) || c === 1477;
    const x = c + (narrow ? 26 : 25), w = narrow ? 15 : 16;
    rect(x, b.y, w, b.e1 - b.y, '#fff');
    rect(x, b.s2, w, b.e - b.s2, '#fff');
    b.cuts.forEach(y => rect(x, y, w, 1, bg));
    if (!u) return;
    const o = w - 15;
    const high = i => (r === 3 && (i === 4 || i === 9) ? 3 : 4);
    u[1].forEach(i => rect(x + o, cells[r][i], 8, high(i), '#5591ce'));
    u[2].forEach(i => rect(x + o + 10, cells[r][i], 5, high(i), '#c80000'));
  });
  const [a, z] = b.ram;
  box(174, a, 17, z - a);
  box(789, a, 9, z - a);
  box(800, a, 9, z - a);
  box(816, a, 7, z - a);
});
[149, 219, 289, 359, 429, 499, 568, 638, 708, 778, 813, 848, 918, 988, 1058, 1128, 1198, 1268, 1338, 1407, 1477, 1547]
  .forEach(x => rect(x, 77, 1, 805, LINE));
tops.slice(1).forEach(y => rect(102, y, 1515, 1, LINE));

// I/O pads: [y, height]
[[77, 14], [91, 12], [243, 14], [257, 12], [383, 14], [397, 12], [536, 13],
 [636, 14], [649, 14], [663, 13], [676, 13], [776, 13], [789, 14], [802, 14], [816, 13]]
  .forEach(([y, h]) => box(1572, y, 17, h));
const PIN = '#c39a60';
rect(1574, 248, 4, 2, PIN); rect(1579, 248, 3, 2, PIN);
rect(1579, 388, 3, 2, PIN); rect(1583, 388, 3, 2, PIN);
rect(1574, 401, 4, 2, PIN); rect(1581, 401, 1, 1, PIN);
rect(1576, 395, 2, 3, '#fff'); rect(1576, 788, 2, 2, '#fff'); rect(1576, 815, 2, 2, '#fff');
rect(1548, 192, 4, 6, '#fff'); rect(1548, 332, 4, 6, '#fff');
out += '<path d="M1573 100Q1558 165 1578.5 243" fill="none" stroke="#fff" stroke-width="2" stroke-dasharray="9 3"/>';
document.getElementById('map').innerHTML = out;
```
